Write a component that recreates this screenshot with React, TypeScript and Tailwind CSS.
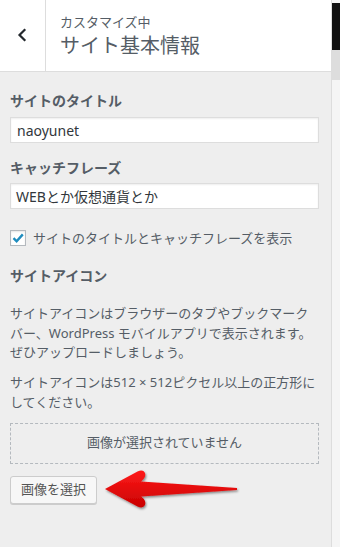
import React from "react";

const jp = { fontFamily: '"Noto Sans", "Noto Sans CJK JP", sans-serif' };

export default function App() {
  return (
    <div className="w-[340px] h-[547px] flex overflow-hidden bg-[#eeeeee]" style={jp}>
      <div className="w-[332px] h-full border-r border-[#dddddd] bg-[#eeeeee] flex flex-col shrink-0 relative">
        {/* Header */}
        <div className="h-[72px] bg-white border-b border-[#dddddd] flex shrink-0">
          <div className="w-[46px] border-r border-[#dddddd] flex items-start justify-center pt-[28px]">
            <svg width="14" height="14" viewBox="0 0 14 14" className="ml-[-2px]">
              <path d="M9.5 2 L4.5 7 L9.5 12" fill="none" stroke="#23282d" strokeWidth="2.2" strokeLinecap="square" />
            </svg>
          </div>
          <div className="pl-[14px] pt-[12px] flex flex-col">
            <span className="text-[13px] leading-[20px] text-[#555d66]">カスタマイズ中</span>
            <span className="text-[20px] leading-[28px] text-[#555d66] mt-[0px]">サイト基本情報</span>
          </div>
        </div>

        {/* Content */}
        <div className="pl-[10px] pr-[12px] pt-[19px] flex flex-col text-[#555d66]">
          <div className="text-[14px] leading-[20px] font-bold text-[#555d66]">サイトのタイトル</div>
          <div className="mt-[6px] h-[26px] bg-white border border-[#dddddd] shadow-[inset_0_1px_2px_rgba(0,0,0,0.07)] flex items-center pl-[6px] text-[14px] text-[#32373c]">
            naoyunet
          </div>

          <div className="mt-[15px] text-[14px] leading-[20px] font-bold text-[#555d66]">キャッチフレーズ</div>
          <div className="mt-[5px] h-[26px] bg-white border border-[#dddddd] shadow-[inset_0_1px_2px_rgba(0,0,0,0.07)] flex items-center pl-[5px] text-[14px] text-[#32373c]">
            WEBとか仮想通貨とか
          </div>

          <div className="mt-[21px] flex items-center h-[16px]">
            <div className="w-[16px] h-[16px] bg-white border border-[#b4b9be] flex items-center justify-center shadow-[inset_0_1px_2px_rgba(0,0,0,0.1)]">
              <svg width="14" height="14" viewBox="0 0 14 14">
                <path d="M2.5 7.2 L5.6 10.3 L11.8 3.4" fill="none" stroke="#1e8cbe" strokeWidth="2.4" />
              </svg>
            </div>
            <span className="ml-[7px] text-[13px] leading-[20px] text-[#555d66]">サイトのタイトルとキャッチフレーズを表示</span>
          </div>

          <div className="mt-[20px] text-[14px] leading-[20px] font-bold text-[#555d66]">サイトアイコン</div>

          <div className="mt-[18px] text-[13px] leading-[19.5px] text-[#555d66] whitespace-nowrap">
            <div>サイトアイコンはブラウザーのタブやブックマーク</div>
            <div>バー、WordPress モバイルアプリで表示されます。</div>
            <div>ぜひアップロードしましょう。</div>
          </div>

          <div className="mt-[10.5px] text-[13px] leading-[19.5px] text-[#555d66] whitespace-nowrap">
            <div>サイトアイコンは512 × 512ピクセル以上の正方形に</div>
            <div>してください。</div>
          </div>

          <div className="mt-[10.5px] h-[41px] border border-dashed border-[#b4b9be] flex items-center justify-center text-[13px] text-[#555d66]">
            画像が選択されていません
          </div>

          <div className="mt-[12px] flex">
            <div className="h-[28px] px-[10px] bg-[#f7f7f7] border border-[#cccccc] rounded-[3px] shadow-[0_1px_0_#cccccc] flex items-center text-[13px] text-[#555555]">
              画像を選択
            </div>
          </div>
        </div>

        {/* Red arrow annotation */}
        <svg className="absolute left-[98px] top-[462px]" width="150" height="54" viewBox="98 462 150 54">
          <defs>
            <linearGradient id="rg" x1="0" y1="0" x2="0" y2="1">
              <stop offset="0" stopColor="#ff1a1a" />
              <stop offset="1" stopColor="#c80000" />
            </linearGradient>
            <filter id="sh" x="-10%" y="-20%" width="130%" height="150%">
              <feDropShadow dx="1" dy="1.5" stdDeviation="0.8" floodColor="#000" floodOpacity="0.45" />
            </filter>
          </defs>
          <path
            d="M105 489 L137.5 471.5 Q143 469 145 473 Q146.5 477.5 141 481.5 L237 488 L237 490 L141 496.5 Q146.5 500.5 145 505 Q143 509 137.5 506.5 Z"
            fill="url(#rg)"
            filter="url(#sh)"
          />
        </svg>
      </div>

      {/* Right preview strip */}
      <div className="flex-1 h-full bg-[#f5f5f5] flex flex-col">
        <div className="h-[3px] bg-[#f5f5f5]" />
        <div className="h-[47px] bg-[#111111]" />
        <div className="h-[30px] bg-[#dddddd]" />
      </div>
    </div>
  );
}
